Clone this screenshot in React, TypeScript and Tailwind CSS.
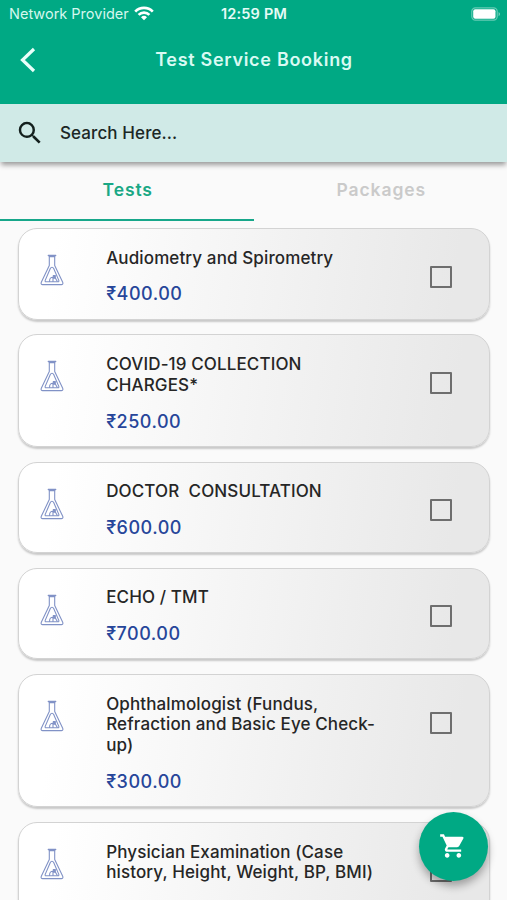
import { useState } from "react";
import { MdSearch, MdShoppingCart } from "react-icons/md";

interface Service {
  id: number;
  lines: string[];
  price?: string;
}

const SERVICES: Service[] = [
  { id: 1, lines: ["Audiometry and Spirometry"], price: "400.00" },
  { id: 2, lines: ["COVID-19 COLLECTION", "CHARGES*"], price: "250.00" },
  { id: 3, lines: ["DOCTOR  CONSULTATION"], price: "600.00" },
  { id: 4, lines: ["ECHO / TMT"], price: "700.00" },
  {
    id: 5,
    lines: ["Ophthalmologist (Fundus,", "Refraction and Basic Eye Check-", "up)"],
    price: "300.00",
  },
  {
    id: 6,
    lines: ["Physician Examination (Case", "history, Height, Weight, BP, BMI)"],
  },
];

function WifiIcon() {
  return (
    <svg className="ml-[5px] h-[15px] w-[20px]" viewBox="0 0 20 15" fill="none" stroke="#fff" strokeWidth="2.7">
      <path d="M1.2 5.6a12.4 12.4 0 0 1 17.6 0" />
      <path d="M4.6 8.9a7.6 7.6 0 0 1 10.8 0" />
      <path d="M10 14.2l-3-3a4.3 4.3 0 0 1 6 0z" fill="#fff" stroke="none" />
    </svg>
  );
}

function BatteryIcon() {
  return (
    <svg className="h-[14px] w-[30px]" viewBox="0 0 30 14">
      <rect x="0.8" y="0.8" width="25.4" height="12.4" rx="3.6" fill="none" stroke="#fff" strokeOpacity="0.4" strokeWidth="1.2" />
      <rect x="2.2" y="2.3" width="22.3" height="9.4" rx="2" fill="#fff" />
      <path d="M27.6 5v4.2c1.8-.8 1.8-3.4 0-4.2z" fill="#fff" fillOpacity="0.5" />
    </svg>
  );
}

function FlaskIcon() {
  return (
    <svg className="h-[32px] w-[24px]" viewBox="0 0 24 32" fill="none" stroke="#8192c6" strokeWidth="1.1" strokeLinejoin="round" strokeLinecap="round">
      <path d="M8.2 1.4h7.6M9.1 2.6h5.8" />
      <path d="M9.3 2.4v9.2L1.3 28.3c-.6 1.4 0 2.3 1.4 2.3h18.6c1.4 0 2-.9 1.4-2.3l-8-16.7V2.4" />
      <path d="M12 13.2c-.8 0-1.3.5-1.7 1.3L5.2 26.4c-.3.9 0 1.4.9 1.4h11.8c.9 0 1.2-.5.9-1.4l-5.1-11.9c-.4-.8-.9-1.3-1.7-1.3z" />
      <path d="M9.6 27.4c-.2-2.8 1-4.2 3.4-4.2v4.2M15.5 24.3l1.7 3" />
      <path d="M13.3 21.5h2v2.6h-2z" fill="#8192c6" />
    </svg>
  );
}

interface CardProps {
  service: Service;
  checked: boolean;
  onToggle: () => void;
}

function ServiceCard({ service, checked, onToggle }: CardProps) {
  return (
    <li className="flex items-start rounded-[19px] border border-[#d3d3d3] bg-linear-[98deg,#ffffff_8%,#e8e8e8_92%] pb-[12.4px] pl-[21.7px] pr-[37px] pt-[18.6px] shadow-[0_2px_2px_rgba(0,0,0,0.2)]">
      <div className="w-[66px] shrink-0 pt-[6.4px]">
        <FlaskIcon />
      </div>
      <div className="grow">
        <div className="text-[17px] font-[450] leading-[20.8px] tracking-[0.12px] text-[#262626]">
          {service.lines.map((line) => (
            <p key={line} className="whitespace-pre">
              {line}
            </p>
          ))}
        </div>
        <p className="mt-[13.9px] h-[24px] text-[18px] font-[550] leading-[24px] tracking-[0.5px] text-[#27469a]">
          {service.price && `₹${service.price}`}
        </p>
      </div>
      <button
        title="select"
        onClick={onToggle}
        className={`mt-[18px] h-[22px] w-[22px] shrink-0 rounded-[1px] border-2 border-[#6e6e6e] ${checked ? "bg-[#00a984]" : ""}`}
      />
    </li>
  );
}

export default function App() {
  const [tab, setTab] = useState("Tests");
  const [selected, setSelected] = useState<number[]>([]);

  const toggle = (id: number) => {
    setSelected(selected.includes(id) ? selected.filter((s) => s !== id) : [...selected, id]);
  };

  return (
    <div className="relative flex h-[900px] w-full flex-col overflow-hidden bg-[#fafafa] font-[Inter,sans-serif]">
      <header className="h-[103.5px] shrink-0 bg-[#00a984] text-white">
        <div className="grid h-[27px] grid-cols-3 items-center pl-[9px] pr-[6px] text-[14.5px]">
          <div className="flex items-center whitespace-nowrap text-[#d5f7ee]">
            Network Provider
            <WifiIcon />
          </div>
          <div className="pr-[2px] text-center font-semibold tracking-[0.2px] text-[#e6fbf6]">12:59 PM</div>
          <div className="flex justify-end">
            <BatteryIcon />
          </div>
        </div>
        <div className="grid h-[65px] grid-cols-[60px_1fr_60px] items-center">
          <button title="back" className="pl-[20px]">
            <svg className="h-[26px] w-[16px]" viewBox="0 0 16 26" fill="none" stroke="#e9fffa" strokeWidth="3.2">
              <path d="M14 2L2.5 13l11.5 11" />
            </svg>
          </button>
          <h1 className="pl-[1px] text-center text-[18px] font-semibold tracking-[0.7px] text-[#d9faf3]">Test Service Booking</h1>
        </div>
      </header>

      <div className="flex h-[58.5px] shrink-0 items-center bg-[#d0eae7] pl-[15px] shadow-[0_4px_5px_-1px_rgba(0,0,0,0.38)]">
        <MdSearch className="h-[30px] w-[30px] text-[#14201e]" />
        <span className="pl-[15px] pt-[2px] text-[17px] font-[450] tracking-[0.1px] text-[#1b2725]">Search Here...</span>
      </div>

      <nav className="grid h-[59px] shrink-0 grid-cols-2">
        {["Tests", "Packages"].map((name) => (
          <button
            key={name}
            onClick={() => setTab(name)}
            className={`border-b-[2.5px] pl-[2px] text-[17.5px] font-semibold tracking-[0.9px] ${
              tab === name ? "border-[#17a78a] text-[#1aa885]" : "border-transparent text-[#cacaca]"
            }`}
          >
            {name}
          </button>
        ))}
      </nav>

      <ul className="flex flex-col gap-[14.6px] px-[17.5px] pt-[7.2px]">
        {SERVICES.map((service) => (
          <ServiceCard
            key={service.id}
            service={service}
            checked={selected.includes(service.id)}
            onToggle={() => toggle(service.id)}
          />
        ))}
      </ul>

      {/* floating cart */}
      <button
        title="cart"
        className="absolute bottom-[19.5px] right-[19.5px] flex h-[68.5px] w-[68.5px] items-center justify-center rounded-full bg-[#00a984] shadow-[0_5px_8px_rgba(0,0,0,0.32)]"
      >
        <MdShoppingCart className="h-[28px] w-[28px] text-white" />
      </button>
    </div>
  );
}
